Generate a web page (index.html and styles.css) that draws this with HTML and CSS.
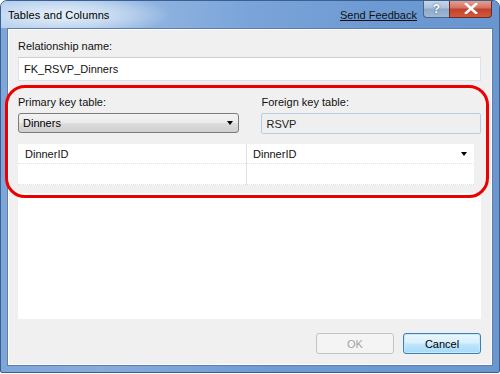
FILE: index.html
```html
<!DOCTYPE html>
<html>
<head>
<meta charset="utf-8">
<link rel="stylesheet" href="styles.css">
</head>
<body>
<div class="window">
  <div class="titlebar">
    <span class="title">Tables and Columns</span>
    <span class="feedback">Send Feedback</span>
    <div class="caption-buttons">
      <div class="cap-btn help">?</div>
      <div class="cap-btn close">
        <svg width="14" height="11" viewBox="0 0 14 11"><path d="M2 1 L12 10 M12 1 L2 10" stroke="#fff" stroke-width="2.6" stroke-linecap="square"/></svg>
      </div>
    </div>
  </div>
  <div class="client">
    <div class="label">Relationship name:</div>
    <div class="textbox">FK_RSVP_Dinners</div>
    <div class="keys">
      <div class="keycol">
        <div class="label">Primary key table:</div>
        <div class="combo"><span>Dinners</span><span class="arrow"></span></div>
      </div>
      <div class="keycol">
        <div class="label">Foreign key table:</div>
        <div class="readonly">RSVP</div>
      </div>
    </div>
    <div class="grid">
      <div class="cell">DinnerID</div>
      <div class="cell right"><span>DinnerID</span><span class="arrow"></span></div>
      <div class="cell"></div>
      <div class="cell right"></div>
    </div>
    <div class="panel"></div>
    <div class="buttons">
      <div class="btn disabled">OK</div>
      <div class="btn default">Cancel</div>
    </div>
    <div class="highlight"></div>
  </div>
</div>
</body>
</html>
```
FILE: styles.css
```css
html, body {
  margin: 0;
  padding: 0;
  background: #ffffff;
}
body {
  width: 500px;
  height: 374px;
  font-family: "Liberation Sans", Arial, sans-serif;
  font-size: 11px;
  color: #111;
}
.window {
  box-sizing: border-box;
  width: 500px;
  height: 373px;
  border: 1px solid #3a5f92;
  border-radius: 7px 7px 2px 2px;
  background: linear-gradient(90deg, #7ea6d8 0%, #86acdb 20%, #6f9bd2 55%, #6a97d0 100%);
  padding: 0 6px 6px 6px;
  display: flex;
  flex-direction: column;
  position: relative;
  overflow: hidden;
}
.titlebar {
  height: 27px;
  display: flex;
  align-items: flex-start;
  position: relative;
  margin: 0 -6px;
  padding: 0 6px;
  background:
    radial-gradient(ellipse 110px 22px at 60px 14px, rgba(236,244,252,0.95) 0%, rgba(210,226,244,0.7) 55%, rgba(180,205,235,0) 100%),
    linear-gradient(90deg, #a9c6e9 0%, #94b7e2 25%, #7aa4d9 50%, #6e9ad3 75%, #6a96d0 100%);
}
.title {
  margin-top: 8px;
  margin-left: 1px;
  font-size: 11px;
  color: #000;
  letter-spacing: 0.1px;
}
.feedback {
  margin-left: auto;
  margin-top: 8px;
  margin-right: 6px;
  text-decoration: underline;
  color: #111;
  font-size: 11px;
}
.caption-buttons {
  display: flex;
  margin-right: 1px;
  margin-top: -1px;
}
.cap-btn {
  height: 18px;
  box-sizing: border-box;
  display: flex;
  align-items: center;
  justify-content: center;
  color: #fff;
  font-weight: bold;
  font-size: 12px;
  border: 1px solid #4a6588;
  border-top: none;
}
.help {
  width: 26px;
  border-radius: 0 0 0 4px;
  border-right: none;
  background: linear-gradient(180deg, #c9d8ea 0%, #aec3dc 45%, #8ea9c9 55%, #9fb8d6 100%);
  text-shadow: 0 0 2px #36506f;
}
.close {
  width: 43px;
  border-radius: 0 0 4px 0;
  border-color: #6d2a25;
  background: linear-gradient(180deg, #e7a595 0%, #d47563 45%, #c2412c 55%, #cf5a3c 100%);
}
.client {
  flex: 1;
  position: relative;
  background: #f0f0f0;
  border: 1px solid #5f7fa9;
  box-shadow: inset 0 0 0 1px #ffffff;
  padding: 10px 11px 11px 10px;
  display: flex;
  flex-direction: column;
}
.label {
  line-height: 15px;
  height: 15px;
  color: #111;
}
.textbox {
  margin-top: 3px;
  height: 24px;
  box-sizing: border-box;
  background: #fff;
  border: 1px solid #dde2e8;
  border-top-color: #c9ced6;
  padding: 0 5px;
  display: flex;
  align-items: center;
}
.keys {
  margin-top: 14px;
  display: flex;
  gap: 22px;
}
.keycol {
  flex: 1;
  display: flex;
  flex-direction: column;
}
.keycol + .keycol .label {
  padding-left: 1px;
}
.combo {
  margin-top: 3px;
  height: 20px;
  box-sizing: border-box;
  border: 1px solid #7c7c7c;
  border-radius: 3px;
  background: linear-gradient(180deg, #f3f3f3 0%, #ebebeb 48%, #dddddd 52%, #cfcfcf 100%);
  display: flex;
  align-items: center;
  padding: 0 5px 0 4px;
  color: #000;
}
.arrow {
  margin-left: auto;
  width: 0;
  height: 0;
  border-left: 3.5px solid transparent;
  border-right: 3.5px solid transparent;
  border-top: 4px solid #000;
}
.readonly {
  margin-top: 3px;
  height: 21px;
  box-sizing: border-box;
  border: 1px solid #b7cde3;
  border-radius: 2px;
  background: #efefef;
  display: flex;
  align-items: center;
  padding: 0 5px;
  color: #222;
}
.grid {
  margin-top: 10px;
  width: 456px;
  display: grid;
  grid-template-columns: 228px 228px;
  grid-template-rows: 20px 21px;
  background: #fff;
}
.cell {
  border-bottom: 1px dotted #e2e2e2;
  display: flex;
  align-items: center;
  padding: 0 7px;
  box-sizing: border-box;
}
.cell.right {
  border-left: 1px solid #e2e2e2;
  padding: 0 7px 0 6px;
}
.panel {
  margin-top: 8px;
  height: 126px;
  background: #fff;
}
.buttons {
  margin-top: 14px;
  display: flex;
  justify-content: flex-end;
  gap: 9px;
}
.btn {
  width: 78px;
  height: 21px;
  box-sizing: border-box;
  border-radius: 3px;
  display: flex;
  align-items: center;
  justify-content: center;
}
.btn.disabled {
  border: 1px solid #c4c4c4;
  background: #f4f4f4;
  color: #a3a3a3;
}
.btn.default {
  border: 1px solid #3c7fb1;
  background: linear-gradient(180deg, #eaf6fd 0%, #d9f0fc 45%, #bee6fd 55%, #a7d9f5 100%);
  box-shadow: inset 0 0 0 1px #c8e8fb;
  color: #000;
}
.highlight {
  position: absolute;
  left: -3px;
  top: 56px;
  width: 484px;
  height: 113px;
  box-sizing: border-box;
  border: 3px solid #ee0000;
  border-radius: 20px;
  pointer-events: none;
}
```
